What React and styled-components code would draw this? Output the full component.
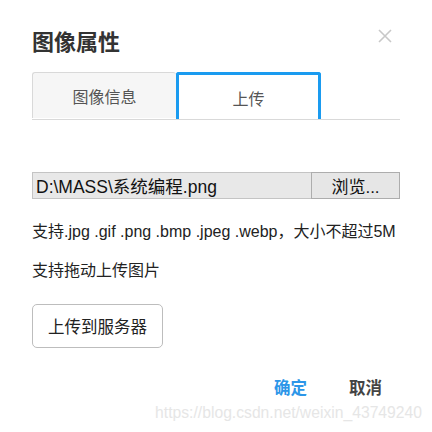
import React from 'react'
import styled, { createGlobalStyle } from 'styled-components'

const GlobalStyle = createGlobalStyle`
  html, body {
    margin: 0;
    padding: 0;
    background: #fff;
  }
  body {
    font-family: "Liberation Sans", "Noto Sans CJK SC", sans-serif;
    color: #333;
  }
`

export default function App() {
  return (
    <Dialog>
      <GlobalStyle />
      <Header>
        <Title>图像属性</Title>
        <Close aria-label="关闭">
          <svg width="14" height="14" viewBox="0 0 14 14">
            <path d="M1 1 L13 13 M13 1 L1 13" stroke="#c8c8c8" strokeWidth="1.6" fill="none" />
          </svg>
        </Close>
      </Header>

      <TabBar>
        <Tab>图像信息</Tab>
        <Tab active>上传</Tab>
      </TabBar>

      <FileRow>
        <FileName>D:\MASS\系统编程.png</FileName>
        <Browse>浏览...</Browse>
      </FileRow>

      <Hint>支持.jpg .gif .png .bmp .jpeg .webp，大小不超过5M</Hint>
      <Hint second>支持拖动上传图片</Hint>

      <UploadButton>上传到服务器</UploadButton>

      <Footer>
        <Action primary>确定</Action>
        <Action>取消</Action>
      </Footer>

      <Watermark>https://blog.csdn.net/weixin_43749240</Watermark>
    </Dialog>
  )
}

const Dialog = styled.div`
  position: relative;
  box-sizing: border-box;
  width: 432px;
  height: 432px;
  padding: 0 32px;
  overflow: hidden;
`

const Header = styled.div`
  position: relative;
  display: flex;
  align-items: center;
  padding-top: 28px;
  height: 30px;
`

const Title = styled.div`
  font-size: 22px;
  font-weight: bold;
  line-height: 30px;
  color: #333;
`

const Close = styled.div`
  position: absolute;
  right: 8px;
  top: 29px;
  width: 14px;
  height: 14px;
  display: flex;
`

const TabBar = styled.div`
  display: flex;
  margin-top: 14px;
  height: 47px;
  border-bottom: 1px solid #d9d9d9;
`

const Tab = styled.div`
  box-sizing: border-box;
  display: flex;
  align-items: center;
  justify-content: center;
  font-size: 16px;
  color: #555;
  width: ${p => (p.active ? '145px' : '144px')};
  height: ${p => (p.active ? '47px' : '46px')};
  background: ${p => (p.active ? '#fff' : '#f6f6f6')};
  border-style: solid;
  border-color: ${p => (p.active ? '#1a9bf0' : '#d9d9d9')};
  border-width: ${p => (p.active ? '3px 3px 0 3px' : '1px 0 0 1px')};
  border-radius: 3px 3px 0 0;
  margin-bottom: ${p => (p.active ? '-1px' : '0')};
  padding-top: ${p => (p.active ? '1px' : '0')};
`

const FileRow = styled.div`
  display: flex;
  margin-top: 52px;
  height: 27px;
`

const FileName = styled.div`
  box-sizing: border-box;
  flex: 0 0 279px;
  display: flex;
  align-items: center;
  padding-left: 3px;
  background: #e8e8e8;
  border: 1px solid #c4c4c4;
  border-right: none;
  font-size: 17.5px;
  color: #111;
  white-space: nowrap;
  overflow: hidden;
`

const Browse = styled.div`
  box-sizing: border-box;
  flex: 1;
  display: flex;
  align-items: center;
  justify-content: center;
  background: #e6e6e6;
  border: 1px solid #adadad;
  font-size: 17px;
  color: #111;
`

const Hint = styled.div`
  margin-top: ${p => (p.second ? '15px' : '21px')};
  font-size: 16px;
  line-height: 24px;
  color: #222;
  white-space: nowrap;
`

const UploadButton = styled.div`
  box-sizing: border-box;
  display: flex;
  align-items: center;
  justify-content: center;
  margin-top: 21px;
  width: 131px;
  height: 44px;
  border: 1px solid #bdbdbd;
  border-radius: 5px;
  font-size: 16.5px;
  color: #222;
`

const Footer = styled.div`
  display: flex;
  justify-content: flex-end;
  gap: 42px;
  margin-top: 28px;
  padding-right: 18px;
`

const Action = styled.div`
  font-size: 16.5px;
  font-weight: bold;
  line-height: 24px;
  color: ${p => (p.primary ? '#2d96e8' : '#444')};
`

const Watermark = styled.div`
  position: absolute;
  right: 10px;
  top: 404px;
  font-size: 15.7px;
  line-height: 18px;
  color: #e6e6e6;
  white-space: nowrap;
`
